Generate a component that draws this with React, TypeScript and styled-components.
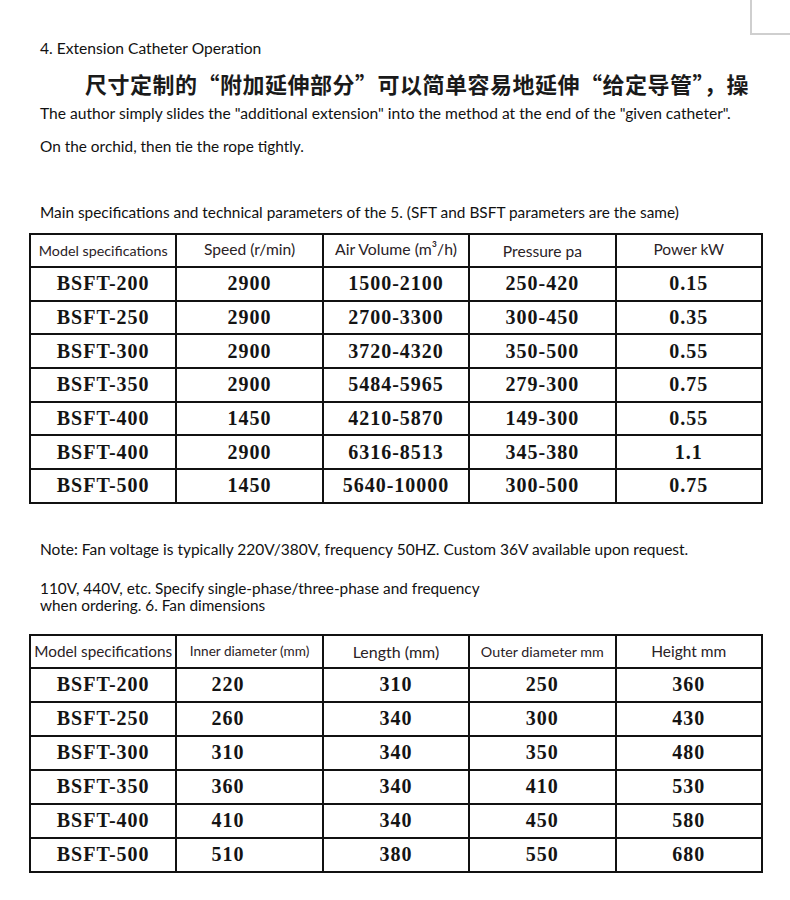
import React from "react";
import styled, { createGlobalStyle } from "styled-components";

const GlobalStyle = createGlobalStyle`
  html, body { margin: 0; padding: 0; background: #ffffff; }
  body { font-family: "Lato", "Noto Sans", sans-serif; color: #1c1c1c; }
`;

const Page = styled.div`
  width: 790px;
  display: flex;
  flex-direction: column;
`;

const TopBar = styled.div`
  height: 35px;
  display: flex;
  justify-content: flex-end;
`;

const CornerMark = styled.div`
  width: 38px;
  height: 33px;
  border-left: 2px solid #cfcfcf;
  border-bottom: 2px solid #cfcfcf;
`;

const Text = styled.p<{ $mt: number; $size?: number; $lh?: number }>`
  margin: ${(p) => p.$mt}px 0 0 40px;
  font-family: "Lato", "Noto Sans", sans-serif;
  font-size: ${(p) => p.$size ?? 15.5}px;
  line-height: ${(p) => p.$lh ?? 20}px;
  color: #111;
  white-space: pre-line;
`;

const ChineseLine = styled.p`
  margin: 10px 0 0 85px;
  font-family: "Noto Sans CJK SC", "Noto Sans", sans-serif;
  font-size: 22px;
  letter-spacing: 0.5px;
  line-height: 30px;
  font-weight: 700;
  color: #1a1a1a;
  white-space: nowrap;
`;

const Table = styled.table<{ $mt: number }>`
  margin: ${(p) => p.$mt}px 0 0 29px;
  width: 734px;
  border-collapse: collapse;
  table-layout: fixed;
  border: 2px solid #111;
`;

const HeadCell = styled.th<{ $size: number; $shift?: number }>`
  height: ${(p) => 31 - (p.$shift ?? 0)}px;
  padding: 0 0 ${(p) => p.$shift ?? 0}px 0;
  border: 2px solid #111;
  font-family: "Lato", "Noto Sans", sans-serif;
  font-weight: 400;
  font-size: ${(p) => p.$size}px;
  color: #2a2226;
  text-align: center;
  vertical-align: middle;
  white-space: nowrap;
`;

const Cell = styled.td<{ $h: number; $left?: boolean }>`
  height: ${(p) => p.$h}px;
  padding: 0 0 0 ${(p) => (p.$left ? 34 : 0)}px;
  border: 2px solid #111;
  font-family: "Liberation Serif", "Times New Roman", serif;
  font-weight: 700;
  font-size: 20px;
  letter-spacing: 1px;
  color: #141414;
  text-align: ${(p) => (p.$left ? "left" : "center")};
  vertical-align: middle;
`;

const specRows = [
  ["BSFT-200", "2900", "1500-2100", "250-420", "0.15"],
  ["BSFT-250", "2900", "2700-3300", "300-450", "0.35"],
  ["BSFT-300", "2900", "3720-4320", "350-500", "0.55"],
  ["BSFT-350", "2900", "5484-5965", "279-300", "0.75"],
  ["BSFT-400", "1450", "4210-5870", "149-300", "0.55"],
  ["BSFT-400", "2900", "6316-8513", "345-380", "1.1"],
  ["BSFT-500", "1450", "5640-10000", "300-500", "0.75"],
];

const dimRows = [
  ["BSFT-200", "220", "310", "250", "360"],
  ["BSFT-250", "260", "340", "300", "430"],
  ["BSFT-300", "310", "340", "350", "480"],
  ["BSFT-350", "360", "340", "410", "530"],
  ["BSFT-400", "410", "340", "450", "580"],
  ["BSFT-500", "510", "380", "550", "680"],
];

export default function App() {
  return (
    <Page>
      <GlobalStyle />
      <TopBar>
        <CornerMark />
      </TopBar>
      <Text $mt={3} $size={15.6}>4. Extension Catheter Operation</Text>
      <ChineseLine>尺寸定制的“附加延伸部分”可以简单容易地延伸“给定导管”，操</ChineseLine>
      <Text $mt={5} $size={15.6}>
        The author simply slides the "additional extension" into the method at the end of the "given catheter".
      </Text>
      <Text $mt={13} $size={15.4}>On the orchid, then tie the rope tightly.</Text>
      <Text $mt={46} $size={15.4}>
        Main specifications and technical parameters of the 5. (SFT and BSFT parameters are the same)
      </Text>
      <Table $mt={11}>
        <thead>
          <tr>
            <HeadCell $size={14.3}>Model specifications</HeadCell>
            <HeadCell $size={15.6} $shift={4}>Speed (r/min)</HeadCell>
            <HeadCell $size={15.8} $shift={4}>Air Volume (m³/h)</HeadCell>
            <HeadCell $size={15.6}>Pressure pa</HeadCell>
            <HeadCell $size={15.5} $shift={4}>Power kW</HeadCell>
          </tr>
        </thead>
        <tbody>
          {specRows.map((r, i) => (
            <tr key={i}>
              {r.map((c, j) => (
                <Cell key={j} $h={31.7}>
                  {c}
                </Cell>
              ))}
            </tr>
          ))}
        </tbody>
      </Table>
      <Text $mt={35} $size={15.5}>
        Note: Fan voltage is typically 220V/380V, frequency 50HZ. Custom 36V available upon request.
      </Text>
      <Text $mt={21} $lh={17} $size={15.35}>
        {"110V, 440V, etc. Specify single-phase/three-phase and frequency\nwhen ordering. 6. Fan dimensions"}
      </Text>
      <Table $mt={20}>
        <thead>
          <tr>
            <HeadCell $size={15.3}>Model specifications</HeadCell>
            <HeadCell $size={13.6}>Inner diameter (mm)</HeadCell>
            <HeadCell $size={16}>Length (mm)</HeadCell>
            <HeadCell $size={14.3}>Outer diameter mm</HeadCell>
            <HeadCell $size={15.5}>Height mm</HeadCell>
          </tr>
        </thead>
        <tbody>
          {dimRows.map((r, i) => (
            <tr key={i}>
              {r.map((c, j) => (
                <Cell key={j} $h={32} $left={j === 1}>
                  {c}
                </Cell>
              ))}
            </tr>
          ))}
        </tbody>
      </Table>
    </Page>
  );
}
